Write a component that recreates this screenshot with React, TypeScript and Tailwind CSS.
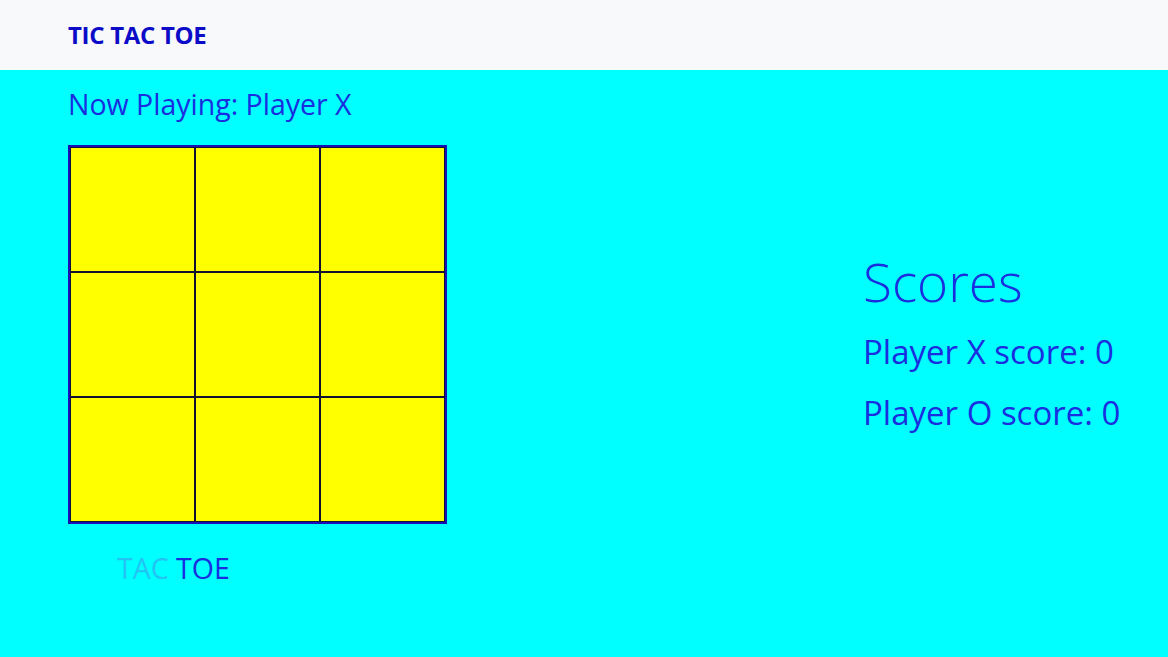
import React from 'react'

const cells = Array.from({ length: 9 }, (_, i) => i)

export default function App() {
  return (
    <div className="min-h-[657px] bg-[#00ffff] font-['Open_Sans',sans-serif]">
      <nav className="h-[70px] bg-[#f8f9fa] flex items-center px-[68px]">
        <span className="text-[24px] font-bold text-[#0b0bc8] tracking-[-0.3px]">TIC TAC TOE</span>
      </nav>

      <main className="flex px-[68px]">
        <section className="w-[795px] shrink-0 flex flex-col">
          <h3 className="mt-[14px] text-[28.5px] leading-[40px] text-[#1a2ee0]">Now Playing: Player X</h3>
          <div className="mt-[21px] w-[379px] h-[379px] border-2 border-[#1a0fb4] grid grid-cols-3 grid-rows-3">
            {cells.map((c) => (
              <button key={c} className="bg-[#ffff00] border border-[#111133]" />
            ))}
          </div>
          <p className="mt-[24px] text-[28.5px] leading-[40px]">
            <span className="text-transparent">TIC </span>
            <span className="text-[#22c4f4]">TAC </span>
            <span className="text-[#1a2ee0]">TOE</span>
          </p>
        </section>

        <aside className="mt-[180px] flex flex-col whitespace-nowrap text-[#1a2ee0]">
          <h2 className="text-[53px] font-light leading-[64px]">Scores</h2>
          <p className="mt-[18px] text-[33px] leading-[40px]">Player X score: 0</p>
          <p className="mt-[21px] text-[33px] leading-[40px]">Player O score: 0</p>
        </aside>
      </main>
    </div>
  )
}
